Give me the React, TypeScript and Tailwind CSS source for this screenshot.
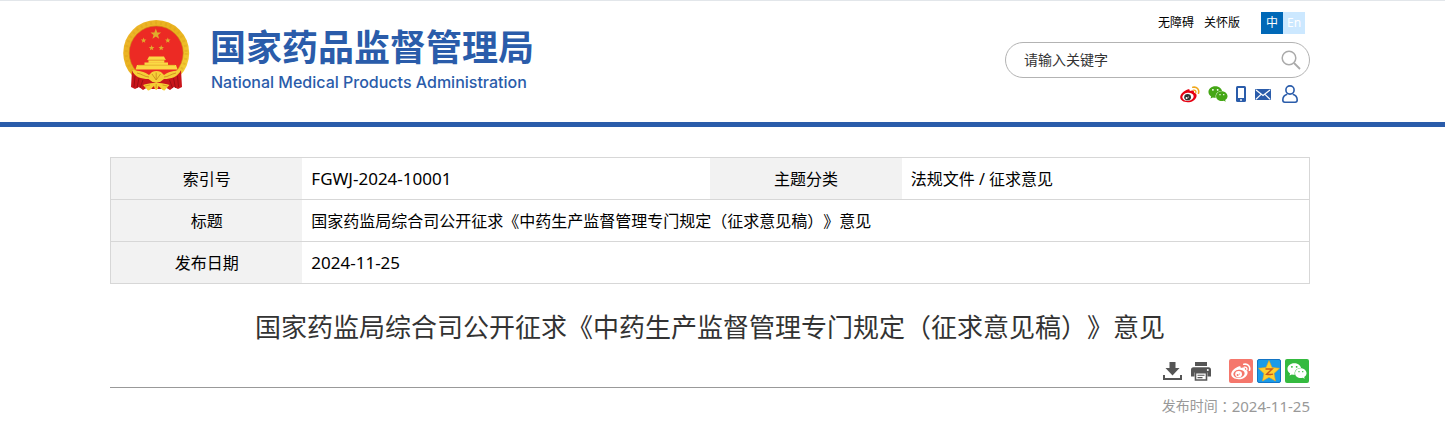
import type { ReactNode } from "react";
import { FaWeixin } from "react-icons/fa";

const NAVY = "#2a5caa";

const STARS = [
  { x: 32.8, y: 15.2, s: 5.6 },
  { x: 20.6, y: 21.5, s: 2.9 },
  { x: 28.6, y: 29, s: 2.9 },
  { x: 38.2, y: 29, s: 2.9 },
  { x: 44.8, y: 21.5, s: 2.9 },
];

const STAR_POINTS = "0,-1 0.26,-0.32 0.95,-0.31 0.4,0.14 0.59,0.81 0,0.42 -0.59,0.81 -0.4,0.14 -0.95,-0.31 -0.26,-0.32";

function Emblem() {
  return (
    <svg viewBox="0 0 67 72" className="h-[72px] w-[67px] shrink-0" role="img" aria-label="国徽">
      <defs>
        <linearGradient id="gold" x1="0" y1="0" x2="1" y2="1">
          <stop offset="0" stopColor="#eeb62c" />
          <stop offset="0.5" stopColor="#e9b21e" />
          <stop offset="1" stopColor="#f8d83c" />
        </linearGradient>
      </defs>
      <circle cx="33.2" cy="34" r="33" fill="url(#gold)" />
      <circle cx="33.2" cy="34" r="30" fill="none" stroke="#d9a01a" strokeWidth="3" strokeDasharray="2 3" opacity="0.4" />
      <circle cx="33.2" cy="34" r="27" fill="#ec2a24" stroke="#c98a14" strokeWidth="0.6" />
      <g fill="#e0ac2c">
        {STARS.map((p) => (
          <polygon key={`${p.x}-${p.y}`} points={STAR_POINTS} transform={`translate(${p.x} ${p.y}) scale(${p.s})`} />
        ))}
      </g>
      {/* gate */}
      <g fill="#fbd944">
        <path d="M26 37.500h15l1.800 3.500H24.200z" />
        <rect x="25.500" y="41.200" width="15.800" height="2.600" />
        <path d="M21.500 43.500h23.500v3H21.500z" />
        <path d="M14 46h39l1.500 4.500H12.500z" />
      </g>
      <path d="M24.500 41h18M15 46.200h37" stroke="#d99a1e" strokeWidth="0.6" />
      {/* drapery */}
      <path d="M9 51l9 6 9 2 13 0 9-2 9-6 1 17-4 2-4-2-4 3-5-3-4 2h-9l-4-2-5 3-4-3-4 2-4-2z" fill="#c9151b" />
      <path d="M12 57l-1 11M16 59l-2 10M20 61l-3 8M54.500 57l1 11M50.500 59l2 10M46.500 61l3 8" stroke="#970f14" strokeWidth="0.9" />
      <path d="M9 51c7 1 12 1 17 5l3-3c3-1.500 6-1.500 9 0l3 3c5-4 10-4 17-5-3 7-10 9-17 9l-4 3h-7.500l-4-3C18.500 60 11 58 9 51z" fill="#f5cf38" />
      <path d="M14 54c5 1 8 4 12 4M53 54c-5 1-8 4-12 4M29 55l4.200 6 4.300-6M33.200 53.500V61" stroke="#c9881a" strokeWidth="0.8" fill="none" />
      <path d="M20 66c3-1 7-2 10-2l3.200-1 3.300 1c3 0 7 1 10 2l-5 5.500c-2 .5-4-3-6-4.500-.5 2-.5 3-2.300 4-1.700-1-1.700-2-2.200-4-2 1.500-4 5-6 4.500z" fill="#f5cd33" />
      <path d="M22 67l5-1M44.500 67l-5-1M33.200 65v4" stroke="#d0901a" strokeWidth="0.8" />
    </svg>
  );
}

type WeiboProps = { body: string; eye: string; pupil: string; glint: string; waves: string };

function Weibo({ body, eye, pupil, glint, waves }: WeiboProps) {
  return (
    <svg viewBox="0 0 20 17" className="h-[17px] w-5" aria-hidden="true">
      <path
        d="M7.600 3.400c1.400-.5 2.500 0 2.100 1.700 2.200-.9 4.700-.8 4.300 1.500 2.400.7 3 2.300 2.400 4.300-.9 2.900-4.400 5.300-8.800 5.300C3.500 16.200.2 14.200.2 11c0-3 4.300-6.700 7.400-7.600z"
        fill={body}
      />
      <ellipse cx="8" cy="10.800" rx="5.700" ry="4" transform="rotate(-8 8 10.800)" fill={eye} />
      <ellipse cx="7.600" cy="11.200" rx="3.400" ry="3.100" fill={pupil} />
      <circle cx="6.600" cy="12" r="1" fill={glint} />
      <circle cx="8.500" cy="10.900" r="0.500" fill={glint} />
      <g fill="none" stroke={waves} strokeLinecap="round">
        <path d="M12.800 1.300c4-.9 6.800 2.200 5.700 6" strokeWidth="1.600" />
        <path d="M13.300 4.200c2-.4 3 1 2.500 2.600" strokeWidth="1.300" />
      </g>
    </svg>
  );
}

function IconButton({ label, className = "", children }: { label: string; className?: string; children: ReactNode }) {
  return (
    <button type="button" aria-label={label} className={`flex items-center justify-center ${className}`}>
      {children}
    </button>
  );
}

function Header() {
  return (
    <header className="border-t border-t-[#e2e6ea] border-b-5 border-b-[#2a5caa] pr-[25px]">
      <div className="mx-auto flex max-w-[1200px] justify-between pb-[18px]">
        <a href="#" className="flex pt-[18px] pl-[13px] text-[#2a5caa]">
          <Emblem />
          <div className="pt-[9px] pl-5">
            <div className="text-4xl leading-10 font-bold whitespace-nowrap">国家药品监督管理局</div>
            <div className="pl-px font-[Inter] text-base leading-7 font-medium whitespace-nowrap">National Medical Products Administration</div>
          </div>
        </a>

        <div className="w-[305px] pt-[11px]">
          <div className="flex items-center justify-end pr-[5px] text-xs">
            <a href="#" className="mr-[10px]">无障碍</a>
            <a href="#" className="mr-[21px]">关怀版</a>
            <a href="#" className="h-[22px] w-[22px] bg-[#0068b7] text-center leading-[22px] text-white">中</a>
            <a href="#" className="h-[22px] w-[22px] bg-[#cce8ff] text-center leading-[22px] text-white">En</a>
          </div>
          <form className="mt-2 flex h-9 items-center rounded-full border border-[#b3b3b3] pr-2 pl-[18px]">
            <input
              type="text"
              aria-label="请输入关键字"
              placeholder="请输入关键字"
              className="min-w-0 flex-1 text-sm outline-none placeholder:text-[#333]"
            />
            <IconButton label="搜索">
              <svg viewBox="0 0 20 20" className="size-5" fill="none" stroke="#aaa" strokeWidth="1.500">
                <circle cx="8" cy="8" r="6.800" />
                <path d="M13 13l6 6" strokeWidth="1.800" />
              </svg>
            </IconButton>
          </form>
          <div className="mt-1.5 flex h-5 items-center justify-end pr-3">
            <IconButton label="微博" className="mr-2">
              <Weibo body="#e60012" eye="#fff" pupil="#333" glint="#fff" waves="#f0a81c" />
            </IconButton>
            <IconButton label="微信" className="mr-2">
              <FaWeixin size={20} color="#45a716" />
            </IconButton>
            <IconButton label="手机版" className="mr-[9px]">
              <svg viewBox="0 0 10 16" className="h-4 w-[10px]">
                <rect width="10" height="16" rx="1.500" fill={NAVY} />
                <rect x="2" y="2" width="6" height="10" fill="#fff" />
                <circle cx="5" cy="14" r="0.900" fill="#fff" />
              </svg>
            </IconButton>
            <IconButton label="邮箱" className="mr-[11px]">
              <svg viewBox="0 0 16 11" className="h-[11px] w-4">
                <rect width="16" height="11" rx="1" fill={NAVY} />
                <path d="M1 1l7 5.500L15 1M1 10.200l4.800-4.600M15 10.200l-4.800-4.600" fill="none" stroke="#fff" strokeWidth="1.200" />
              </svg>
            </IconButton>
            <IconButton label="个人中心">
              <svg viewBox="0 0 16 18" className="h-[18px] w-4" fill="none" stroke={NAVY} strokeWidth="1.600">
                <circle cx="8" cy="5" r="4.100" />
                <path d="M5.300 9.200C2.400 10 .8 12.500.8 15c0 1.500.7 2.200 2 2.200h10.400c1.300 0 2-.7 2-2.200 0-2.500-1.600-5-4.500-5.800" />
              </svg>
            </IconButton>
          </div>
        </div>
      </div>
    </header>
  );
}

const TH = "w-[16%] bg-[#f2f2f2] text-center font-normal";
const TD = "pl-[9px]";
const ROW = "h-[42px] border border-[#d7d7d7]";

function InfoTable() {
  return (
    <table className="w-full table-fixed border-collapse text-base text-black">
      <tbody>
        <tr className={ROW}>
          <th scope="row" className={TH}>索引号</th>
          <td className={`${TD} w-[34%] text-[17px]`}>FGWJ-2024-10001</td>
          <th scope="row" className={TH}>主题分类</th>
          <td className={`${TD} w-[34%]`}>法规文件 / 征求意见</td>
        </tr>
        <tr className={ROW}>
          <th scope="row" className={TH}>标题</th>
          <td className={TD} colSpan={3}>国家药监局综合司公开征求《中药生产监督管理专门规定（征求意见稿）》意见</td>
        </tr>
        <tr className={ROW}>
          <th scope="row" className={TH}>发布日期</th>
          <td className={`${TD} text-[17px]`} colSpan={3}>2024-11-25</td>
        </tr>
      </tbody>
    </table>
  );
}

function Toolbar() {
  return (
    <div className="mt-3 flex items-center justify-end border-b border-[#999] pr-px pb-1">
      <IconButton label="下载" className="mr-[9px]">
        <svg viewBox="0 0 19 18" className="h-[18px] w-[19px]" fill="#555">
          <path d="M6.500 0h6v6h4L9.500 13.500 2.500 6h4z" />
          <path d="M0 13h2v3h15v-3h2v5H0z" />
        </svg>
      </IconButton>
      <IconButton label="打印" className="mr-[18px]">
        <svg viewBox="0 0 20 19" className="h-[19px] w-5">
          <path d="M4 0h12v4H4z" fill="#555" />
          <path d="M2.500 5.200h15A2.500 2.500 0 0 1 20 7.700V14.500h-3.500V10.500h-13v4H0V7.700a2.500 2.500 0 0 1 2.500-2.500z" fill="#555" />
          <circle cx="16.800" cy="8" r="1" fill="#fff" />
          <path d="M4.500 10.800h11V18h-11z" fill="#fff" stroke="#555" strokeWidth="1.600" />
          <path d="M6.500 13.200h7M6.500 15.600h5" stroke="#555" strokeWidth="1.100" />
        </svg>
      </IconButton>
      <IconButton label="分享到微博" className="mr-1 size-6 rounded-xs bg-[#f5776c]">
        <Weibo body="#fff" eye="#f5776c" pupil="#fff" glint="#f5776c" waves="#fff" />
      </IconButton>
      <IconButton label="分享到QQ空间" className="mr-1 size-6 rounded-xs border border-[#1374c4] bg-[#1a9be8]">
        <svg viewBox="0 0 22 22" className="size-[22px]">
          <path d="M11 .5l3 7 7.500.8-5.500 5.200 1.500 7.500L11 17.300 4.500 21 6 13.500.5 8.300 8 7.500z" fill="#ffd02e" stroke="#f2a51a" strokeWidth="0.600" strokeLinejoin="round" />
          <path d="M7.500 9h6.700l-5.700 5.300c2 .4 4.500.3 6.500-.2" fill="none" stroke="#c9581b" strokeWidth="1.400" />
        </svg>
      </IconButton>
      <IconButton label="分享到微信" className="size-6 rounded-xs bg-[#34ba3f]">
        <FaWeixin size={20} color="#fff" />
      </IconButton>
    </div>
  );
}

export default function App() {
  return (
    <div className="bg-white font-['Noto_Sans','Noto_Sans_CJK_SC',sans-serif] text-black [text-spacing-trim:space-all]" lang="zh-CN">
      <Header />
      <main className="pr-[25px]">
        <div className="mx-auto max-w-[1200px] pt-[30px]">
          <InfoTable />
          <h1 className="mt-[23px] text-center text-[26px] leading-10 text-[#333]">
            国家药监局综合司公开征求《中药生产监督管理专门规定（征求意见稿）》意见
          </h1>
          <Toolbar />
          <p className="flex items-center justify-end pt-2 text-sm text-[#999]">
            发布时间<span className="font-['Noto_Sans_CJK_TC']" lang="zh-TW">：</span>
            <time dateTime="2024-11-25" className="text-[15px] leading-5">2024-11-25</time>
          </p>
        </div>
      </main>
    </div>
  );
}
